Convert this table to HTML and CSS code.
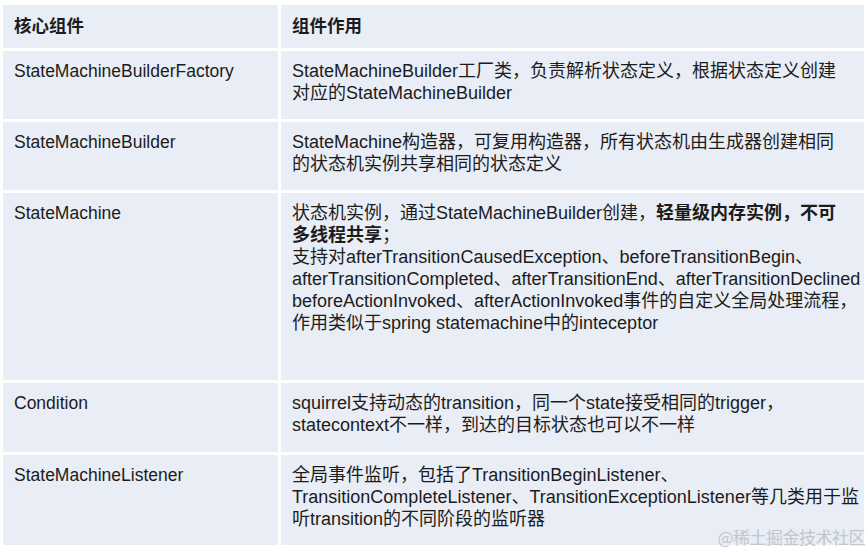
FILE: index.html
```html
<!DOCTYPE html>
<html lang="zh">
<head>
<meta charset="utf-8">
<link rel="stylesheet" href="styles.css">
</head>
<body>
<div class="table">
  <div class="cell head">核心组件</div>
  <div class="cell desc head">组件作用</div>

  <div class="cell">StateMachineBuilderFactory</div>
  <div class="cell desc">StateMachineBuilder工厂类，负责解析状态定义，根据状态定义创建<br>对应的StateMachineBuilder</div>

  <div class="cell">StateMachineBuilder</div>
  <div class="cell desc">StateMachine构造器，可复用构造器，所有状态机由生成器创建相同<br>的状态机实例共享相同的状态定义</div>

  <div class="cell">StateMachine</div>
  <div class="cell desc">状态机实例，通过StateMachineBuilder创建，<b>轻量级内存实例，不可<br>多线程共享</b>；<br>支持对afterTransitionCausedException、beforeTransitionBegin、<br>afterTransitionCompleted、afterTransitionEnd、afterTransitionDeclined<br>beforeActionInvoked、afterActionInvoked事件的自定义全局处理流程，<br>作用类似于spring statemachine中的inteceptor</div>

  <div class="cell">Condition</div>
  <div class="cell desc">squirrel支持动态的transition，同一个state接受相同的trigger，<br>statecontext不一样，到达的目标状态也可以不一样</div>

  <div class="cell">StateMachineListener</div>
  <div class="cell desc">全局事件监听，包括了TransitionBeginListener、<br>TransitionCompleteListener、TransitionExceptionListener等几类用于监<br>听transition的不同阶段的监听器</div>
</div>
<div class="watermark">@稀土掘金技术社区</div>
</body>
</html>
```

FILE: styles.css
```css
html, body {
  background: #ffffff;
}
body {
  margin: 5px 0 0 3px;
  font-family: "Liberation Sans", "Noto Sans CJK SC", sans-serif;
  color: #1c1c1c;
  position: relative;
  width: 865px;
  height: 547px;
}
.table {
  display: grid;
  grid-template-columns: 275px 583px;
  grid-template-rows: 43px 68px 68px 187px 69px 90px;
  column-gap: 3px;
  row-gap: 3px;
}
.cell {
  background: #e9edf5;
  padding: 9px 0 0 11px;
  font-size: 17.5px;
  line-height: 22px;
  white-space: nowrap;
  overflow: hidden;
}
.desc {
  font-size: 18px;
}
.cell b {
  font-weight: 700;
}
.head {
  font-weight: 700;
  font-size: 17.5px;
  padding-top: 10px;
}
.watermark {
  position: absolute;
  right: 3px;
  bottom: 4px;
  font-family: "Noto Sans CJK SC", sans-serif;
  font-size: 17px;
  line-height: 22px;
  color: #c2c6cd;
  letter-spacing: -0.5px;
}
```
